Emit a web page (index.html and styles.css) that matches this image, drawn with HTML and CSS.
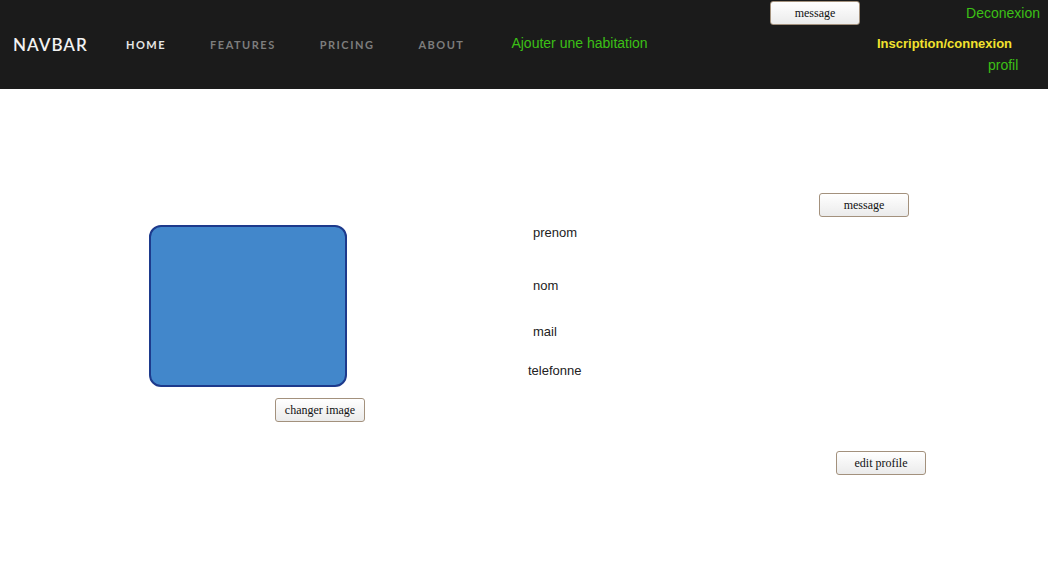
FILE: index.html
```html
<!DOCTYPE html>
<html lang="fr">
<head>
<meta charset="utf-8">
<title>Profil</title>
<link rel="stylesheet" href="styles.css">
</head>
<body>
<header class="navbar">
  <div class="nav-left">
    <span class="brand">NAVBAR</span>
    <nav class="links">
      <a class="link active">HOME</a>
      <a class="link">FEATURES</a>
      <a class="link">PRICING</a>
      <a class="link">ABOUT</a>
    </nav>
    <a class="green add">Ajouter une habitation</a>
  </div>
  <div class="nav-right">
    <div class="row-top">
      <button class="btn">message</button>
      <a class="green deco">Deconexion</a>
    </div>
    <div class="row-mid"><a class="yellow">Inscription/connexion</a></div>
    <div class="row-bot"><a class="green">profil</a></div>
  </div>
</header>
<main class="content">
  <section class="col-photo">
    <div class="photo"></div>
    <button class="btn">changer image</button>
  </section>
  <section class="col-info">
    <p class="field f-prenom">prenom</p>
    <p class="field f-nom">nom</p>
    <p class="field f-mail">mail</p>
    <p class="field f-tel">telefonne</p>
  </section>
  <section class="col-actions">
    <button class="btn">message</button>
    <button class="btn edit">edit profile</button>
  </section>
</main>
</body>
</html>
```
FILE: styles.css
```css
* { box-sizing: border-box; }
body {
  margin: 0;
  background: #fff;
  font-family: "Liberation Sans", Arial, sans-serif;
}
a { text-decoration: none; cursor: pointer; }

.navbar {
  height: 89px;
  background: #1b1b1b;
  display: flex;
}
.nav-left {
  display: flex;
  align-items: center;
  padding-left: 13px;
}
.brand {
  font-family: "Lato", sans-serif;
  font-weight: 600;
  font-size: 17px;
  letter-spacing: 1px;
  color: #f2f2f2;
  width: 113px;
}
.links {
  display: flex;
  gap: 44px;
}
.link {
  font-family: "Lato", sans-serif;
  font-weight: 700;
  font-size: 11px;
  letter-spacing: 1.5px;
  color: #7d7d7d;
}
.link.active { color: #e6e6e6; }
.green { color: #3cc016; font-size: 14px; }
.add { margin-left: 47px; margin-top: -3px; }
.yellow {
  color: #f2e22e;
  font-weight: bold;
  font-size: 13px;
}

.nav-right {
  margin-left: auto;
  width: 278px;
  display: flex;
  flex-direction: column;
}
.row-top {
  display: flex;
  align-items: center;
  padding-top: 1px;
  height: 25px;
}
.deco { margin-left: auto; margin-right: 8px; margin-top: -1px; }
.row-mid {
  height: 20px;
  margin-top: 9px;
  padding-left: 107px;
}
.row-bot {
  padding-left: 218px;
  margin-top: 2px;
}

.btn {
  width: 90px;
  height: 24px;
  padding: 0;
  font-family: "Liberation Serif", "Times New Roman", serif;
  font-size: 12px;
  color: #111;
  background: linear-gradient(#ffffff, #ebebeb);
  border: 1px solid #a3917d;
  border-radius: 3px;
}

.content {
  display: flex;
  padding-left: 149px;
}
.col-photo {
  width: 216px;
  margin-top: 136px;
  display: flex;
  flex-direction: column;
  align-items: flex-end;
}
.photo {
  align-self: flex-start;
  width: 198px;
  height: 162px;
  background: #4287cb;
  border: 2px solid #1d3a8c;
  border-radius: 12px;
}
.photo + .btn { margin-top: 11px; }

.col-info {
  width: 291px;
  margin-left: 163px;
  margin-top: 136px;
}
.field {
  margin: 0;
  font-size: 13px;
  line-height: 15px;
  color: #222;
  padding-left: 5px;
}
.f-nom { margin-top: 38px; }
.f-mail { margin-top: 31px; }
.f-tel { margin-top: 24px; padding-left: 0; }

.col-actions {
  margin-top: 104px;
  display: flex;
  flex-direction: column;
}
.col-actions .edit { margin-left: 17px; margin-top: 234px; }
```
